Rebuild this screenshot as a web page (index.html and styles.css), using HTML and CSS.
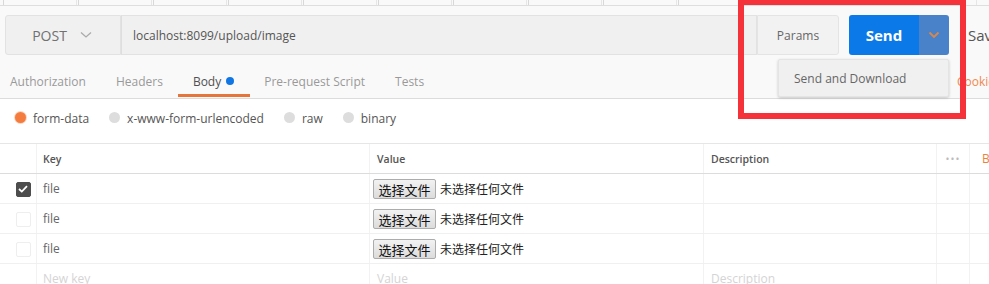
FILE: index.html
```html
<!DOCTYPE html>
<html>
<head>
<meta charset="utf-8">
<link rel="stylesheet" href="styles.css">
</head>
<body>
<div class="page">
  <div class="top">
    <div class="tabstrip">
      <span class="t"></span><span class="t"></span><span class="t"></span><span class="t"></span><span class="t"></span><span class="t active"></span><span class="t"></span><span class="t"></span><span class="t"></span><span class="t"></span><span class="t"></span><span class="t"></span><span class="t"></span>
    </div>
    <div class="req">
      <div class="method">POST <svg class="chev" width="12" height="8" viewBox="0 0 12 8"><path d="M1 1.5 L6 6 L11 1.5" fill="none" stroke="#aaa" stroke-width="1.3"/></svg></div>
      <div class="url">localhost:8099/upload/image</div>
      <div class="params">Params</div>
      <div class="sendgrp">
        <div class="send">Send</div>
        <div class="sendarrow"><svg width="12" height="8" viewBox="0 0 12 8"><path d="M1.5 1.5 L6 6 L10.5 1.5" fill="none" stroke="#d9874a" stroke-width="1.8"/></svg></div>
      </div>
      <div class="save">Save</div>
    </div>
    <div class="subtabs">
      <div class="st">Authorization</div>
      <div class="st">Headers</div>
      <div class="st on">Body <span class="dot"></span></div>
      <div class="st">Pre-request Script</div>
      <div class="st">Tests</div>
      <div class="cookies">Cookies</div>
    </div>
  </div>
  <div class="radios">
    <label class="r"><span class="rb sel"></span>form-data</label>
    <label class="r"><span class="rb"></span>x-www-form-urlencoded</label>
    <label class="r"><span class="rb"></span>raw</label>
    <label class="r"><span class="rb"></span>binary</label>
  </div>
  <div class="table">
    <div class="row head">
      <div class="c chk"></div>
      <div class="c key">Key</div>
      <div class="c val">Value</div>
      <div class="c desc">Description</div>
      <div class="c more">•••</div>
      <div class="c bulk">Bulk Edit</div>
    </div>
    <div class="row">
      <div class="c chk"><span class="cb on"><svg width="10" height="8" viewBox="0 0 10 8"><path d="M1 4 L3.8 6.6 L9 1.2" fill="none" stroke="#fff" stroke-width="1.8"/></svg></span></div>
      <div class="c key">file</div>
      <div class="c val"><span class="fbtn">选择文件</span><span class="fnone">未选择任何文件</span></div>
      <div class="c desc"></div>
      <div class="c more"></div>
      <div class="c bulk"></div>
    </div>
    <div class="row">
      <div class="c chk"><span class="cb"></span></div>
      <div class="c key">file</div>
      <div class="c val"><span class="fbtn">选择文件</span><span class="fnone">未选择任何文件</span></div>
      <div class="c desc"></div>
      <div class="c more"></div>
      <div class="c bulk"></div>
    </div>
    <div class="row">
      <div class="c chk"><span class="cb"></span></div>
      <div class="c key">file</div>
      <div class="c val"><span class="fbtn">选择文件</span><span class="fnone">未选择任何文件</span></div>
      <div class="c desc"></div>
      <div class="c more"></div>
      <div class="c bulk"></div>
    </div>
    <div class="row ph">
      <div class="c chk"></div>
      <div class="c key">New key</div>
      <div class="c val ph-val">Value</div>
      <div class="c desc">Description</div>
      <div class="c more"></div>
      <div class="c bulk"></div>
    </div>
  </div>
  <div class="dropdown">Send and Download</div>
  <div class="redbox"></div>
</div>
</body>
</html>
```
FILE: styles.css
```css
* { box-sizing: border-box; }
html, body { margin: 0; padding: 0; }
body {
  font-family: "Open Sans", "Noto Sans", "Noto Sans CJK SC", sans-serif;
  font-size: 12px;
  color: #505050;
  background: #fff;
  width: 989px;
  height: 284px;
  overflow: hidden;
}
.page { position: relative; width: 989px; height: 284px; overflow: hidden; }
.top { background: #f9f9f9; border-bottom: 1px solid #dcdcdc; }
.tabstrip {
  height: 6px;
  display: flex;
  border-bottom: 1px solid #dedede;
  padding-left: 3px;
  overflow: hidden;
}
.tabstrip .t {
  flex: 0 0 74px;
  border-left: 1px solid #d8d8d8;
  border-right: 1px solid #e6e6e6;
  margin-right: 1px;
}
.tabstrip .t.active { background: #f9f9f9; border-bottom: 1px solid #f9f9f9; height: 7px; }
.req {
  display: flex;
  align-items: stretch;
  height: 40px;
  margin-top: 9px;
  padding-left: 5px;
  overflow: hidden;
}
.req > * { flex-shrink: 0; }
.method {
  width: 116px;
  background: #f0f0f0;
  border: 1px solid #e2e2e2;
  border-radius: 3px 0 0 3px;
  display: flex;
  align-items: center;
  justify-content: center;
  gap: 13px;
  font-size: 14px;
  color: #707070;
  padding-right: 2px;
}
.url {
  width: 636px;
  background: #f0f0f0;
  border: 1px solid #e2e2e2;
  border-left: 1px solid #dedede;
  display: flex;
  align-items: center;
  padding-left: 11px;
  font-size: 12px;
  color: #555;
}
.params {
  width: 82px;
  background: #f2f2f2;
  border: 1px solid #e4e4e4;
  border-radius: 0 3px 3px 0;
  display: flex;
  align-items: center;
  justify-content: center;
  font-size: 12px;
  color: #666;
}
.sendgrp { display: flex; margin-left: 10px; border-radius: 3px; overflow: hidden; }
.send {
  width: 70px;
  background: #0c79e9;
  color: #fff;
  font-weight: 700;
  font-size: 15px;
  display: flex;
  align-items: center;
  justify-content: center;
}
.sendarrow {
  width: 30px;
  background: #4a82c9;
  display: flex;
  align-items: center;
  justify-content: center;
}
.save {
  margin-left: 19px;
  font-size: 15px;
  color: #555;
  display: flex;
  align-items: center;
}
.subtabs {
  height: 43px;
  display: flex;
  align-items: stretch;
  padding-left: 10px;
  position: relative;
}
.st {
  display: flex;
  align-items: center;
  padding-top: 9px;
  color: #999;
  font-size: 12px;
  margin-right: 30px;
  position: relative;
}
.st.on { color: #505050; }
.st.on::after {
  content: "";
  position: absolute;
  left: -15px;
  right: -16px;
  bottom: 1px;
  height: 3px;
  background: #e5753b;
}
.st .dot {
  width: 8px; height: 8px; border-radius: 50%;
  background: #0f76e3;
  margin-left: 5px;
  display: inline-block;
}
.cookies {
  position: absolute;
  left: 957px;
  top: 18px;
  color: #f0884e;
  font-size: 12px;
}
.radios {
  height: 44px;
  display: flex;
  align-items: center;
  padding-left: 15px;
  padding-bottom: 5px;
}
.r {
  display: flex;
  align-items: center;
  font-size: 12px;
  color: #555;
  margin-right: 20px;
}
.rb {
  width: 11px; height: 11px; border-radius: 50%;
  background: #ddd;
  margin-right: 7px;
  margin-top: -3px;
}
.rb.sel { background: #f47c3e; box-shadow: 0 0 0 1px #fbd5c0; }
.table { border-top: 1px solid #e6e6e6; }
.row { display: flex; height: 30px; border-bottom: 1px solid #f0f0f0; overflow: hidden; }
.row.head { border-bottom: 1px solid #dcdcdc; }
.c { flex-shrink: 0; display: flex; align-items: center; border-right: 1px solid #f2f2f2; white-space: nowrap; }
.chk { width: 37px; justify-content: center; padding-left: 1px; }
.key { width: 333px; padding-left: 6px; color: #666; }
.val { width: 334px; padding-left: 3px; }
.head .val, .ph-val { padding-left: 7px; }
.desc { width: 233px; padding-left: 7px; }
.more { width: 33px; justify-content: center; color: #ccc; font-size: 9px; letter-spacing: 1px; }
.bulk { width: 60px; padding-left: 12px; color: #e8833f; border-right: none; }
.head .c { font-size: 10.5px; font-weight: 600; color: #555; }
.head .bulk { color: #e8833f; font-weight: 400; font-size: 12px; }
.head .more { font-weight: 400; color: #bbb; }
.cb {
  width: 15px; height: 15px;
  border: 1px solid #eee;
  border-radius: 2px;
  display: flex; align-items: center; justify-content: center;
  margin-left: 9px;
  margin-top: 1px;
}
.cb.on { background: #4d4d4d; border-color: #4d4d4d; }
.fbtn {
  display: inline-flex;
  align-items: center;
  justify-content: center;
  width: 63px; height: 20px;
  border: 1px solid #acacac;
  border-radius: 2px;
  background: linear-gradient(#f2f2f2, #dcdcdc);
  font-family: "Noto Sans CJK SC", sans-serif;
  font-size: 13px;
  color: #111;
  margin-top: 1px;
}
.fnone {
  margin-left: 4px;
  font-family: "Noto Sans CJK SC", sans-serif;
  font-size: 12px;
  color: #222;
}
.row.ph .c { color: #d4d4d4; }
.dropdown {
  position: absolute;
  left: 778px;
  top: 59px;
  width: 171px;
  height: 38px;
  background: #f0f0f0;
  border: 1px solid #e4e4e4;
  box-shadow: 0 1px 3px rgba(0,0,0,0.2);
  border-radius: 2px;
  display: flex;
  align-items: center;
  padding-left: 15px;
  font-size: 12px;
  color: #666;
}
.redbox {
  position: absolute;
  left: 738px;
  top: -1px;
  width: 228px;
  height: 120px;
  border: 6px solid #f5323a;
}
```
